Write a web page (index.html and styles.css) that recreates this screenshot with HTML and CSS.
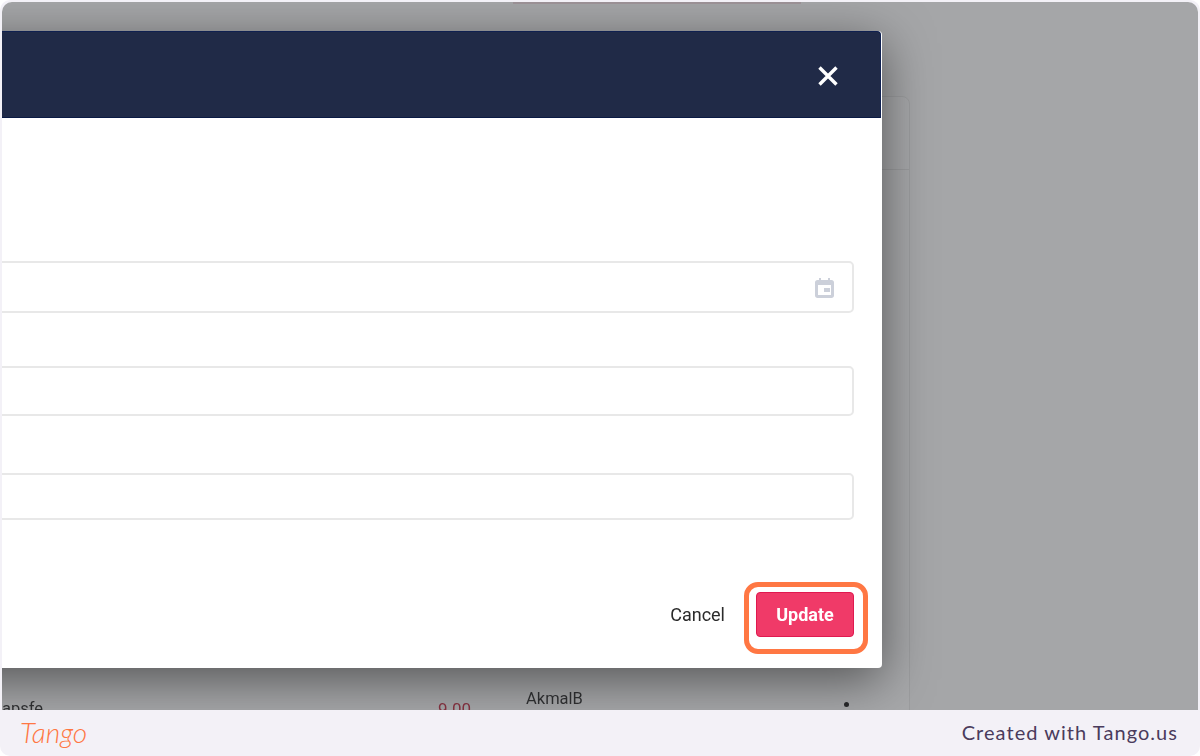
FILE: index.html
```html
<!DOCTYPE html>
<html lang="en">
<head>
    <meta charset="UTF-8">
    <meta name="viewport" content="width=device-width, initial-scale=1.0">
    <title>Update</title>
    <link rel="stylesheet" href="styles.css">
</head>
<body>
    <div class="shot">
        <div class="page">
            <div class="top-tab"></div>
            <div class="card">
                <div class="card-head"></div>
                <div class="card-body">
                    <div class="row">
                        <span class="cell-name">apsfe</span>
                        <span class="cell-amount">9.00</span>
                        <span class="cell-user">AkmalB</span>
                        <span class="cell-menu"></span>
                    </div>
                </div>
            </div>
        </div>
        <div class="overlay"></div>
        <div class="modal">
            <div class="modal-head">
                <svg class="close" width="22" height="22" viewBox="0 0 22 22">
                    <path d="M2.500 2.500L19.500 19.500M19.500 2.500L2.500 19.500" stroke="#fff" stroke-width="3.400" fill="none"/>
                </svg>
            </div>
            <div class="modal-body">
                <div class="field field-date">
                    <svg class="calendar" width="19" height="20" viewBox="0 0 19 20">
                        <path fill="#ccd0da" fill-rule="evenodd" d="M4 0h2v2h7V0h2v2h1.500C18 2 19 3 19 4.500v13c0 1.500-1 2.500-2.500 2.500h-14C1 20 0 19 0 17.500v-13C0 3 1 2 2.500 2H4zM3 7v10h13V7zM9 10h6v4H9z"/>
                    </svg>
                </div>
                <div class="field field-two"></div>
                <div class="field field-three"></div>
            </div>
            <div class="modal-foot">
                <button class="btn-cancel">Cancel</button>
                <button class="btn-update">Update</button>
            </div>
        </div>
        <div class="highlight"></div>
    </div>
    <div class="footer">
        <span class="logo">Tango</span>
        <span class="credit">Created with Tango.us</span>
    </div>
</body>
</html>
```

FILE: styles.css
```css
* {
    box-sizing: border-box;
}
html {
    background: #fff;
}
html, body {
    margin: 0;
    height: 756px;
    overflow: hidden;
}
body {
    background: #f3f1f7;
    border-radius: 10px;
    display: flex;
    flex-direction: column;
    font-family: Roboto, "Liberation Sans", sans-serif;
}

/* screenshot area */
.shot {
    position: relative;
    height: 708px;
    margin: 2px 2px 0 2px;
    border-radius: 10px 10px 0 0;
    overflow: hidden;
    background: #fff;
}
.page {
    height: 100%;
    background: #fafafa;
    padding-right: 288px;
    filter: blur(0.4px);
}
.top-tab {
    width: 288px;
    height: 2px;
    margin-left: 511px;
    background: #ecd6dc;
}
.card {
    height: 640px;
    margin: 92px 0 0 -40px;
    background: #fff;
    border: 1px solid #e8e8e8;
    border-radius: 8px;
}
.card-head {
    height: 73px;
    border-bottom: 1px solid #e6e6e6;
}
.card-body {
    padding: 520px 0 0 39px;
}
.row {
    display: grid;
    grid-template-columns: 436px 88px 318px 5px;
    font-size: 16.500px;
    line-height: 18px;
    color: #111;
}
.cell-name {
    margin-top: 10px;
}
.cell-amount {
    margin-top: 10px;
    font-size: 17px;
    color: #c0152f;
}
.cell-menu {
    width: 5px;
    height: 5px;
    margin-top: 12px;
    background: #000;
    border-radius: 50%;
    box-shadow: 0 8px 0 #000;
}
.overlay {
    position: absolute;
    inset: 0;
    background: rgba(80, 82, 86, 0.5);
}

/* dialog */
.modal {
    position: absolute;
    left: -300px;
    top: 29px;
    width: 1180px;
    height: 637px;
    background: #fff;
    border-radius: 4px;
    box-shadow: 0 12px 50px rgba(0, 0, 0, 0.5);
    display: flex;
    flex-direction: column;
    filter: blur(0.4px);
}
.modal-head {
    height: 87px;
    margin-right: 1px;
    background: #202a47;
    border-top: 1px solid #0f2050;
    border-right: 1px solid #0f2050;
    border-bottom: 1px solid #0a1a44;
    border-radius: 4px 4px 0 0;
    display: flex;
    justify-content: flex-end;
    align-items: flex-start;
    padding: 33px 41px 0 0;
}
.modal-body {
    flex: 1;
    padding: 143px 28px 0 0;
}
.field {
    border: 2px solid #e8e8e8;
    border-radius: 5px;
    display: flex;
    justify-content: flex-end;
    align-items: center;
}
.field-date {
    height: 52px;
    padding-right: 18px;
}
.field-two {
    height: 50px;
    margin-top: 53px;
}
.field-three {
    height: 47px;
    margin-top: 57px;
}
.calendar {
    margin-top: 2px;
}
.modal-foot {
    display: flex;
    justify-content: flex-end;
    align-items: center;
    gap: 31px;
    padding: 0 28px 31px 0;
}
.btn-cancel {
    background: none;
    border: none;
    padding: 0;
    font-family: inherit;
    font-size: 18px;
    color: #2b2b2b;
}
.btn-update {
    width: 98px;
    height: 45px;
    background: #f03a68;
    border: 1px solid #e0194f;
    border-radius: 4px;
    color: #fff;
    font-family: inherit;
    font-size: 18px;
    font-weight: 700;
}
.highlight {
    position: absolute;
    left: 742px;
    top: 580px;
    width: 124px;
    height: 72px;
    border: 5px solid #ff7743;
    border-radius: 14px;
}

/* tango bar */
.footer {
    height: 46px;
    display: flex;
    justify-content: space-between;
    align-items: center;
    padding: 0 22px 2px 20px;
}
.logo {
    font-family: Lato, "Noto Sans", sans-serif;
    font-style: italic;
    font-weight: 300;
    font-size: 28px;
    color: #ff7743;
}
.credit {
    font-family: Lato, "Noto Sans", sans-serif;
    font-size: 20px;
    letter-spacing: 1.050px;
    color: #4a3b5c;
}
```
